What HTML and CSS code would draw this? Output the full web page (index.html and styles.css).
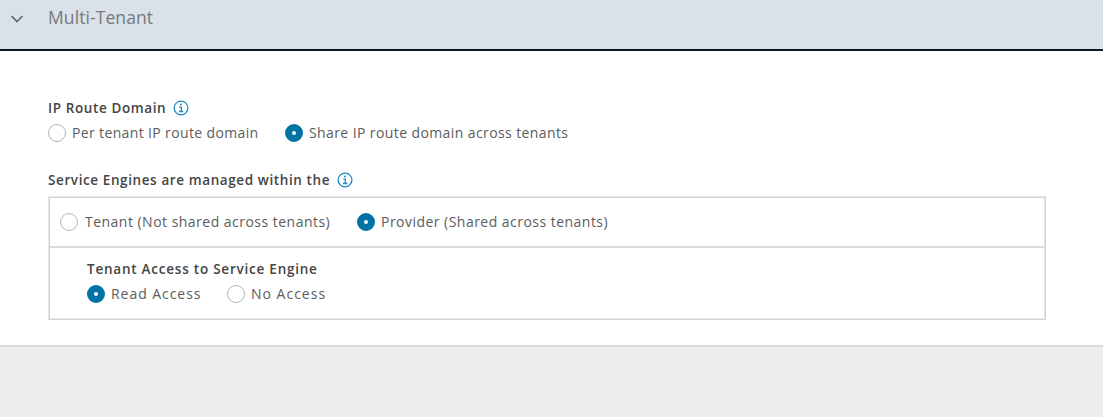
FILE: index.html
```html
<!DOCTYPE html>
<html lang="en">
<head>
<meta charset="utf-8">
<title>Multi-Tenant</title>
<link rel="stylesheet" href="styles.css">
</head>
<body>
<header class="header">
  <svg class="chevron" width="14" height="10" viewBox="0 0 14 10"><path d="M1.5 2 7 7.5 12.5 2"/></svg>
  <h1 class="title">Multi-Tenant</h1>
</header>
<main class="panel">
  <div class="heading"><span class="t-domain">IP Route Domain</span>
    <svg class="info" viewBox="0 0 16 16"><circle cx="8" cy="8" r="6.9"/><path d="M6.2 7.1H8.3V11.4M5.9 11.5H10.3"/><circle class="dot" cx="7.9" cy="4.5" r="1"/></svg>
  </div>
  <div class="options">
    <label class="option w-per"><span class="radio"></span><span class="t-per">Per tenant IP route domain</span></label>
    <label class="option"><span class="radio checked"></span><span class="t-share">Share IP route domain across tenants</span></label>
  </div>
  <div class="heading engines"><span class="t-engines">Service Engines are managed within the</span>
    <svg class="info" viewBox="0 0 16 16"><circle cx="8" cy="8" r="6.9"/><path d="M6.2 7.1H8.3V11.4M5.9 11.5H10.3"/><circle class="dot" cx="7.9" cy="4.5" r="1"/></svg>
  </div>
  <section class="box">
    <div class="options scope">
      <label class="option w-tenant"><span class="radio"></span><span class="t-tenant">Tenant (Not shared across tenants)</span></label>
      <label class="option"><span class="radio checked"></span><span class="t-provider">Provider (Shared across tenants)</span></label>
    </div>
    <div class="access">
      <div class="heading"><span class="t-access">Tenant Access to Service Engine</span></div>
      <div class="options">
        <label class="option w-read"><span class="radio checked"></span><span class="t-read">Read Access</span></label>
        <label class="option"><span class="radio"></span><span class="t-no">No Access</span></label>
      </div>
    </div>
  </section>
</main>
</body>
</html>
```
FILE: styles.css
```css
* { box-sizing: border-box; }
body {
  margin: 0;
  min-height: 417px;
  background: #ededed;
  color: #5c5c5c;
  font: 14px/18px Metropolis, "Open Sans", sans-serif;
  white-space: nowrap;
}
.header {
  display: flex;
  height: 51px;
  background: #d9e2e9;
  border-bottom: 2px solid #11161a;
}
.chevron { margin: 14px 0 0 10px; fill: none; stroke: #666; stroke-width: 1.7; }
.title {
  margin: 5px 0 0 24px;
  font-size: 17.5px;
  line-height: 24px;
  font-weight: 400;
  letter-spacing: 0.09px;
  color: #77797b;
}
.panel {
  height: 296px;
  padding: 48px 57px 0 48px;
  background: #fff;
  border-bottom: 2px solid #dadada;
}
.heading {
  display: flex;
  align-items: center;
  gap: 7px;
  height: 18px;
  font-size: 13.5px;
  font-weight: 600;
  color: #454545;
}
.info { width: 16px; height: 16px; fill: none; stroke: #2089c4; stroke-width: 1.3; }
.info .dot { fill: #2089c4; stroke: none; }
.options { display: flex; margin-top: 7px; }
.option { display: flex; align-items: center; gap: 6px; }
.radio {
  width: 18px;
  height: 18px;
  border: 1px solid #b3b3b3;
  border-radius: 50%;
  background: #fff;
}
.radio.checked { border: 7px solid #0072a3; }
.w-per { width: 237px; }
.w-tenant { width: 297px; gap: 7px; }
.w-read { width: 140px; }
.t-domain { letter-spacing: 0.6px; }
.t-engines { letter-spacing: 0.6px; }
.t-access { letter-spacing: 0.77px; }
.t-per { letter-spacing: 0.36px; }
.t-share { letter-spacing: 0.4px; }
.t-tenant { letter-spacing: 0.48px; }
.t-provider { letter-spacing: 0.47px; }
.t-read { letter-spacing: 0.95px; }
.t-no { letter-spacing: 1px; }
.engines { margin-top: 29px; }
.box {
  width: 998px;
  height: 124px;
  margin-top: 7px;
  border: 1px solid;
  border-color: #e6e6e6 #d3d3d3 #d3d3d3 #e6e6e6;
  box-shadow: inset 1px 1px #d3d3d3, inset -1px -1px #e6e6e6;
  padding: 1px;
}
.scope { height: 50px; margin: 0; padding: 0 0 0 10px; border-bottom: 2px solid #dadada; }
.access { padding: 12px 0 0 37px; }
```
